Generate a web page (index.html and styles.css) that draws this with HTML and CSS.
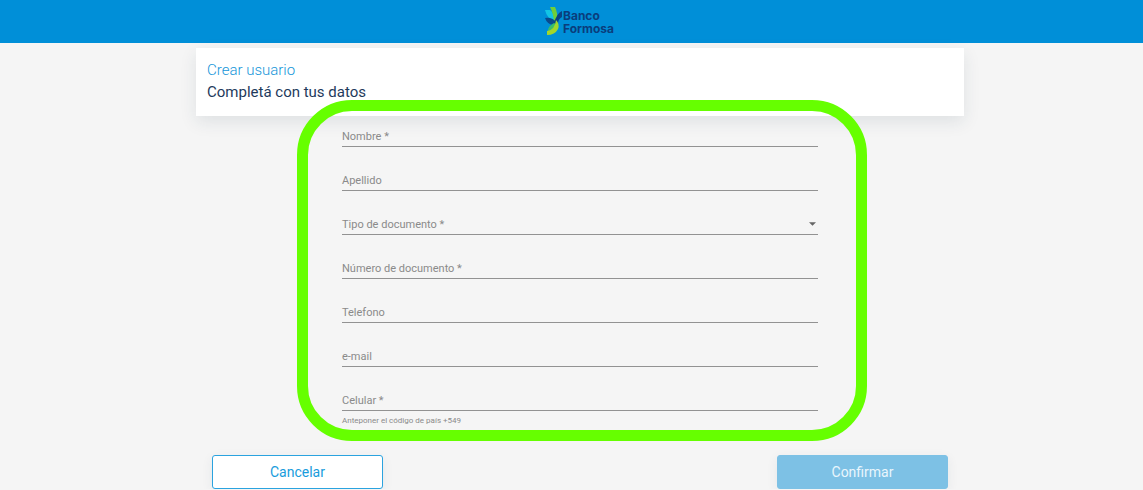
FILE: index.html
```html
<!DOCTYPE html>
<html lang="es">
<head>
<meta charset="utf-8">
<meta name="viewport" content="width=device-width, initial-scale=1">
<title>Banco Formosa - Crear usuario</title>
<link rel="stylesheet" href="styles.css">
</head>
<body>
<header class="topbar">
  <div class="brand">
    <svg class="brand-mark" viewBox="0 0 18 30" aria-hidden="true">
      <path d="M0 4H5Q9 7 10 15Q2 13 0 4Z" fill="#12c5e5"/>
      <path d="M5 1H10Q13 7 12 15L9 17Q9 9 5 1Z" fill="#6fcf3a"/>
      <path d="M0 12Q7 11 11 16L8 19Q2 18 0 12Z" fill="#0a4a8c"/>
      <path d="M17 5V11Q13 13 13 18Q12 24 6 26Q10 21 9 17Q12 7 17 5Z" fill="#0a4384"/>
      <path d="M3 25Q3 20 9 17L11 18Q9 24 3 25Z" fill="#3bbd68"/>
      <path d="M11 14Q15 18 13 23Q10 29 2 29V25Q10 24 11 14Z" fill="#a2d62b"/>
    </svg>
    <span class="brand-name"><span>Banco</span><span>Formosa</span></span>
  </div>
</header>
<main class="page">
  <section class="title-card">
    <h1 class="title">Crear usuario</h1>
    <p class="subtitle">Completá con tus datos</p>
  </section>
  <form class="form">
    <div class="fields">
      <div class="field"><label for="nombre">Nombre *</label><input id="nombre" type="text" required></div>
      <div class="field"><label for="apellido">Apellido</label><input id="apellido" type="text"></div>
      <div class="field">
        <label for="tipo">Tipo de documento *</label>
        <select id="tipo" required><option value=""></option></select>
        <svg class="arrow" viewBox="0 0 8 4" aria-hidden="true"><path d="M0 0h8L4 4z"/></svg>
      </div>
      <div class="field"><label for="numero">Número de documento *</label><input id="numero" type="text" required></div>
      <div class="field"><label for="telefono">Telefono</label><input id="telefono" type="tel"></div>
      <div class="field"><label for="email">e-mail</label><input id="email" type="email"></div>
      <div class="field"><label for="celular">Celular *</label><input id="celular" type="tel" aria-describedby="ayuda" required></div>
    </div>
    <p class="hint" id="ayuda">Anteponer el código de país +549</p>
    <div class="highlight"></div>
    <div class="actions">
      <button class="btn btn-outline" type="button">Cancelar</button>
      <button class="btn btn-primary" type="submit" disabled>Confirmar</button>
    </div>
  </form>
</main>
</body>
</html>
```
FILE: styles.css
```css
* { box-sizing: border-box; }

body {
  margin: 0;
  background: #f5f5f5;
  font-family: Roboto, "Liberation Sans", sans-serif;
  color: #8a8a8a;
}

h1, p { margin: 0; }

.topbar {
  display: flex;
  justify-content: center;
  padding: 6px 0 7px 16px;
  background: #008fd8;
}

.brand {
  display: flex;
  align-items: center;
}

.brand-mark {
  width: 18px;
  height: 30px;
}

.brand-name {
  display: grid;
  padding-top: 2px;
  font: 700 12px/13px Inter, "Open Sans", sans-serif;
  color: #0a3d7c;
}

.page { padding: 5px 0 0 17px; }

.title-card {
  max-width: 768px;
  margin: 0 auto;
  padding: 11px 11px 13px;
  background: #fff;
  box-shadow: 0 6px 16px rgba(30, 60, 80, 0.1);
}

.title {
  font-size: 15px;
  line-height: 22px;
  font-weight: 300;
  color: #1595d9;
}

.subtitle {
  font-size: 15px;
  line-height: 22px;
  color: #1e3a5c;
}

.form {
  position: relative;
  max-width: 768px;
  margin: 0 auto;
}

.fields {
  display: grid;
  gap: 13px;
  padding: 0 146px;
}

.field {
  display: flex;
  align-items: center;
  height: 31px;
  padding-top: 10px;
  border-bottom: 1px solid #929292;
  font-size: 11px;
}

.field input,
.field select {
  flex: 1;
  min-width: 0;
  height: 20px;
  padding: 0 4px;
  border: 0;
  outline: 0;
  background: transparent;
  font: inherit;
  color: #333;
  appearance: none;
}

.arrow {
  width: 7px;
  height: 4px;
  margin-right: 2px;
  fill: #666;
}

.hint {
  padding: 4px 146px 0;
  font-size: 8px;
  line-height: 12px;
}

/* Green outline drawn over the card and the fields */
.highlight {
  position: absolute;
  top: -16px;
  left: 101px;
  right: 97px;
  bottom: 48px;
  border: 11px solid #6f0;
  border-radius: 55px;
  pointer-events: none;
}

.actions {
  display: flex;
  justify-content: space-between;
  padding: 28px 16px 0;
}

.btn {
  width: 171px;
  height: 34px;
  border: 1px solid #2ba3df;
  border-radius: 3px;
  font: 14px Roboto, sans-serif;
  box-shadow: 0 3px 12px rgba(30, 60, 80, 0.07);
}

.btn-outline {
  background: #fff;
  color: #189cdc;
}

.btn-primary {
  border-color: #7dc1e5;
  background: #7dc1e5;
  color: #e9f6fd;
}
```
